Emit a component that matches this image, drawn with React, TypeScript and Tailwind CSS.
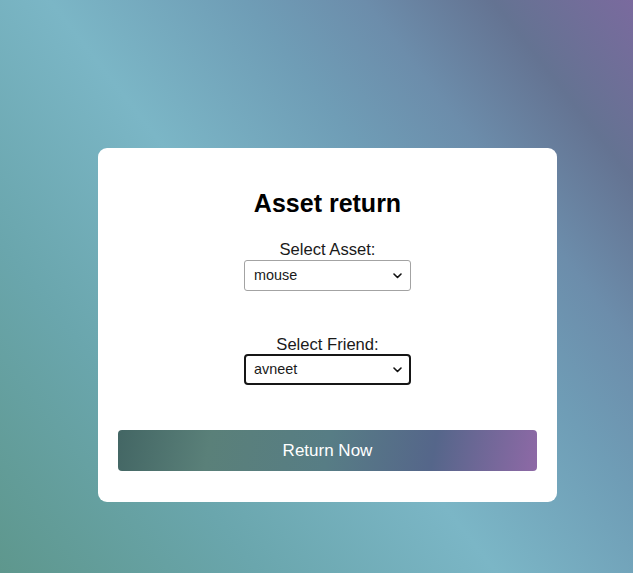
import React, { useState } from 'react';

const assets = ['mouse', 'keyboard', 'monitor', 'laptop'];
const friends = ['avneet', 'rahul', 'simran', 'karan'];

const Chevron: React.FC = () => (
  <svg
    className="pointer-events-none absolute right-[9px] top-1/2 -translate-y-1/2"
    width="9"
    height="6"
    viewBox="0 0 9 6"
    fill="none"
  >
    <path d="M1 1l3.5 3.5L8 1" stroke="#111" strokeWidth="1.6" strokeLinecap="round" strokeLinejoin="round" />
  </svg>
);

const AssetReturn: React.FC = () => {
  const [asset, setAsset] = useState('mouse');
  const [friend, setFriend] = useState('avneet');

  return (
    <div
      className="min-h-[573px] w-full pl-[98px] pt-[148px] bg-[linear-gradient(52deg,#5e978d_0%,#6aa6ad_24%,#7bb6c6_46%,#6f9db6_64%,#6c8dab_75%,#647392_87%,#7a6a9e_100%)]"
      style={{ fontFamily: '"Liberation Sans", Arial, sans-serif' }}
    >
      <div className="w-[459px] rounded-[9px] bg-white px-5 pt-[41px] pb-[31px] flex flex-col items-center text-black">
        <h2 className="text-[25px] leading-[29px] font-bold">Asset return</h2>

        {/* Asset */}
        <label className="mt-[22px] text-[16.6px] leading-[19px] text-[#1a1a1a]">Select Asset:</label>
        <div className="relative mt-[1px]">
          <select
            value={asset}
            onChange={(e) => setAsset(e.target.value)}
            className="appearance-none w-[167px] h-[31px] rounded-[3px] border border-[#a3a3a3] bg-white pl-[9px] text-[14.4px] text-[#1a1a1a] outline-none"
          >
            {assets.map((a) => (
              <option key={a} value={a}>{a}</option>
            ))}
          </select>
          <Chevron />
        </div>

        {/* Friend */}
        <label className="mt-[44px] text-[16.6px] leading-[19px] text-[#1a1a1a]">Select Friend:</label>
        <div className="relative">
          <select
            value={friend}
            onChange={(e) => setFriend(e.target.value)}
            className="appearance-none w-[167px] h-[31px] rounded-[4px] border-2 border-[#161616] bg-white pl-[8px] text-[14.4px] text-[#1a1a1a] outline-none"
          >
            {friends.map((f) => (
              <option key={f} value={f}>{f}</option>
            ))}
          </select>
          <Chevron />
        </div>

        <button className="mt-[45px] w-full h-[41px] rounded-[4px] text-white text-[17px] bg-[linear-gradient(100deg,#436664_0%,#5a8079_22%,#577d85_50%,#55668a_75%,#8e69a6_100%)]">
          Return Now
        </button>
      </div>
    </div>
  );
};

export default function App() {
  return <AssetReturn />;
}
